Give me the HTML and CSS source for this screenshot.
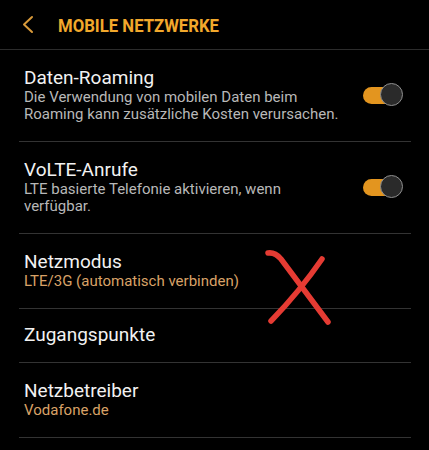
FILE: index.html
```html
<!DOCTYPE html>
<html lang="de">
<head>
<meta charset="utf-8">
<title>Mobile Netzwerke</title>
<link rel="stylesheet" href="styles.css">
</head>
<body>
<div class="screen">
  <header class="appbar">
    <svg class="back" width="14" height="20" viewBox="0 0 14 20" aria-hidden="true">
      <polyline points="10,2 2,9.5 10,17" fill="none" stroke="#d99a3a" stroke-width="2" stroke-linecap="round" stroke-linejoin="round"/>
    </svg>
    <h1 class="title"><span>MOBILE NETZWERKE</span></h1>
  </header>
  <ul class="list">
    <li class="row">
      <div class="text">
        <div class="label">Daten-Roaming</div>
        <div class="sub">Die Verwendung von mobilen Daten beim Roaming kann zusätzliche Kosten verursachen.</div>
      </div>
      <div class="toggle"><span class="knob"></span></div>
    </li>
    <li class="row">
      <div class="text">
        <div class="label">VoLTE-Anrufe</div>
        <div class="sub">LTE basierte Telefonie aktivieren, wenn verfügbar.</div>
      </div>
      <div class="toggle"><span class="knob"></span></div>
    </li>
    <li class="row">
      <div class="text">
        <div class="label">Netzmodus</div>
        <div class="sub sub--accent">LTE/3G (automatisch verbinden)</div>
      </div>
    </li>
    <li class="row row--single">
      <div class="text">
        <div class="label">Zugangspunkte</div>
      </div>
    </li>
    <li class="row">
      <div class="text">
        <div class="label">Netzbetreiber</div>
        <div class="sub sub--accent">Vodafone.de</div>
      </div>
    </li>
  </ul>
  <svg class="cross" width="80" height="90" viewBox="0 0 80 90" aria-hidden="true">
    <path d="M8,8 Q15,7 21,14 L68,77" fill="none" stroke="#e53b33" stroke-width="5.5" stroke-linecap="round"/>
    <path d="M62,14 Q40,46 11,76" fill="none" stroke="#e53b33" stroke-width="5.5" stroke-linecap="round"/>
  </svg>
</div>
</body>
</html>
```
FILE: styles.css
```css
html, body {
  margin: 0;
  padding: 0;
  background: #000;
}
body {
  font-family: Roboto, "Liberation Sans", sans-serif;
  color: #f2f2f2;
}
.screen {
  position: relative;
  width: 429px;
  height: 450px;
  overflow: hidden;
  background: #000;
}
.appbar {
  height: 50px;
  box-sizing: border-box;
  border-bottom: 1px solid #2c2c2c;
  display: flex;
  align-items: center;
  padding-left: 22px;
}
.back {
  display: block;
  margin-top: 1px;
}
.title {
  margin: 2px 0 0 22px;
  font-size: 19px;
  font-weight: 700;
  line-height: 22px;
  color: #f2a82c;
  white-space: nowrap;
}
.title span {
  display: inline-block;
  transform: scaleX(0.88);
  transform-origin: left center;
}
.list {
  list-style: none;
  margin: 0 18px 0 19px;
  padding: 0;
}
.row {
  display: flex;
  align-items: center;
  padding: 17px 0 18px 5px;
  border-bottom: 1px solid #333;
}
.row--single {
  padding-top: 15px;
  padding-bottom: 16px;
}
.text {
  flex: 1;
  min-width: 0;
}
.label {
  font-size: 19px;
  line-height: 22px;
  color: #f2f2f2;
}
.sub {
  font-size: 15px;
  line-height: 17px;
  color: #b8b8b8;
  padding-right: 18px;
}
.sub--accent {
  color: #d9a267;
}
.toggle {
  position: relative;
  width: 40px;
  height: 17px;
  margin-right: 8px;
  flex: none;
}
.toggle::before {
  content: "";
  position: absolute;
  left: 0;
  top: 0;
  width: 32px;
  height: 17px;
  border-radius: 9px;
  background: #e3951f;
}
.knob {
  position: absolute;
  right: 0;
  top: -3.5px;
  width: 21px;
  height: 21px;
  border-radius: 50%;
  background: #2a2a2a;
  border: 1.5px solid #8f8f8f;
}
.cross {
  position: absolute;
  left: 260px;
  top: 245px;
}
```
